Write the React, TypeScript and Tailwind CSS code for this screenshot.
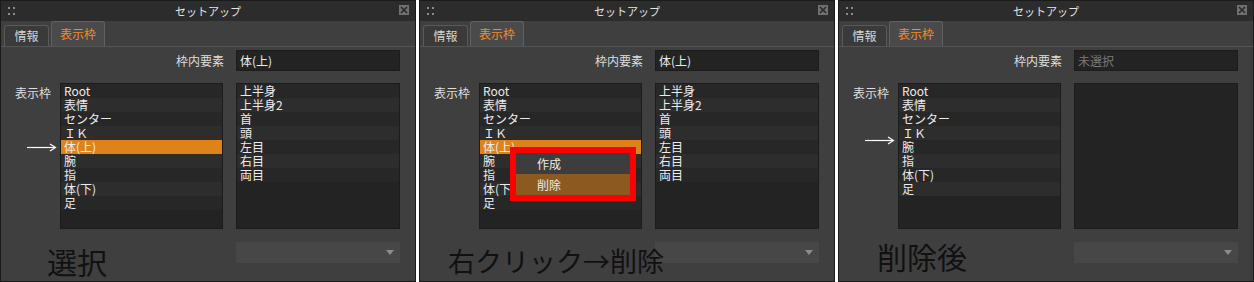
import React from 'react';

const font = "font-['Noto_Sans_CJK_JP','Noto_Sans',sans-serif]";

const leftItems = ['Root', '表情', 'センター', 'ＩＫ', '体(上)', '腕', '指', '体(下)', '足'];
const rightItems = ['上半身', '上半身2', '首', '頭', '左目', '右目', '両目'];

function Arrow({ top }: { top: number }) {
    return (
        <svg className="absolute left-[26px]" style={{ top }} width="30" height="9" viewBox="0 0 30 9">
            <line x1="0" y1="4.5" x2="28" y2="4.5" stroke="#ffffff" strokeWidth="1.2" />
            <path d="M23 1 L28.5 4.5 L23 8" fill="none" stroke="#ffffff" strokeWidth="1.2" />
        </svg>
    );
}

function ListBox({ items, selected }: { items: string[]; selected?: number }) {
    return (
        <div className="h-[146px] w-full border border-[#1c1c1c] bg-[#232323]">
            {items.map((item, i) => (
                <div
                    key={item}
                    className={
                        'h-[14px] pl-[3px] text-[12px] leading-[14px] text-[#ececec] ' +
                        (i === selected ? 'bg-[#e0821a]' : i % 2 === 0 ? 'bg-[#272727]' : 'bg-[#2d2d2d]')
                    }
                >
                    {item}
                </div>
            ))}
        </div>
    );
}

function Panel({ step }: { step: 1 | 2 | 3 }) {
    const deleted = step === 3;
    const items = deleted ? leftItems.filter((x) => x !== '体(上)') : leftItems;

    return (
        <div className={`relative flex h-[282px] w-[416px] shrink-0 flex-col border border-[#1a1a1a] bg-[#3f3f3f] ${font}`}>
            {/* title bar */}
            <div className="relative flex h-[20px] shrink-0 items-center justify-center bg-[#2c2c2c]">
                <div className="absolute left-[7px] top-[6px] grid grid-cols-2 gap-x-[3px] gap-y-[4px]">
                    <span className="h-[2px] w-[2px] bg-[#8a8a8a]" />
                    <span className="h-[2px] w-[2px] bg-[#8a8a8a]" />
                    <span className="h-[2px] w-[2px] bg-[#8a8a8a]" />
                    <span className="h-[2px] w-[2px] bg-[#8a8a8a]" />
                </div>
                <span className="text-[11px] text-[#e4e4e4]">セットアップ</span>
                <svg className="absolute right-[6px] top-[4px]" width="10" height="10" viewBox="0 0 10 10">
                    <rect width="10" height="10" fill="#707070" />
                    <path d="M2 2 L8 8 M8 2 L2 8" stroke="#2a2a2a" strokeWidth="1.6" />
                </svg>
            </div>

            {/* tabs */}
            <div className="flex h-[26px] shrink-0 items-end gap-[2px] border-b border-[#555555] pl-[3px]">
                <div className="flex h-[21px] w-[45px] items-center justify-center rounded-t-[3px] border border-b-0 border-[#5a5a5a] bg-[#3a3a3a] text-[12px] text-[#d4d4d4]">
                    情報
                </div>
                <div className="flex h-[25px] w-[54px] items-center justify-center rounded-t-[3px] border border-b-0 border-[#616161] bg-[#4a4a4a] text-[12px] text-[#f28c28]">
                    表示枠
                </div>
            </div>

            {/* 枠内要素 */}
            <div className="mt-[3px] flex items-center">
                <div className="w-[223px] text-right text-[12px] text-[#dedede]">枠内要素</div>
                <div className="ml-[12px] flex h-[21px] w-[164px] items-center border border-[#1c1c1c] bg-[#232323] pl-[3px] text-[12px]">
                    {deleted ? <span className="text-[#7a7a7a]">未選択</span> : <span className="text-[#ececec]">体(上)</span>}
                </div>
            </div>

            {/* lists */}
            <div className="mt-[12px] flex pl-[14px]">
                <div className="w-[45px] pt-[1px] text-[12px] text-[#dedede]">表示枠</div>
                <div className="w-[163px]">
                    <ListBox items={items} selected={deleted ? undefined : 4} />
                </div>
                <div className="ml-[13px] w-[164px]">
                    <ListBox items={deleted ? [] : rightItems} />
                </div>
            </div>

            {/* dropdown */}
            <div className="mt-[13px] ml-[235px] flex h-[21px] w-[164px] items-center justify-end bg-[#474747] pr-[6px]">
                <svg width="8" height="5" viewBox="0 0 8 5">
                    <path d="M0 0 H8 L4 5 Z" fill="#8c8c8c" />
                </svg>
            </div>

            {step === 1 && <Arrow top={142} />}
            {step === 3 && <Arrow top={135} />}

            {step === 2 && (
                <div className="absolute left-[90px] top-[146px] w-[126px] border-[6px] border-[#ff0000] bg-[#3d3d3d] text-[12px] text-[#ececec]">
                    <div className="flex h-[21px] items-center pl-[21px]">作成</div>
                    <div className="flex h-[21px] items-center bg-[#8c5a20] pl-[21px]">削除</div>
                </div>
            )}

            {step === 1 && (
                <div className="absolute left-[46px] top-[245px] text-[30px] leading-none text-[#111111]">選択</div>
            )}
            {step === 2 && (
                <div className="absolute left-[28px] top-[246px] text-[27px] leading-none text-[#111111]">右クリック→削除</div>
            )}
            {step === 3 && (
                <div className="absolute left-[38px] top-[240px] text-[30px] leading-none text-[#111111]">削除後</div>
            )}
        </div>
    );
}

export default function App() {
    return (
        <div className="flex h-[282px] w-[1254px] gap-[3px] overflow-hidden bg-white">
            <Panel step={1} />
            <Panel step={2} />
            <Panel step={3} />
        </div>
    );
}
